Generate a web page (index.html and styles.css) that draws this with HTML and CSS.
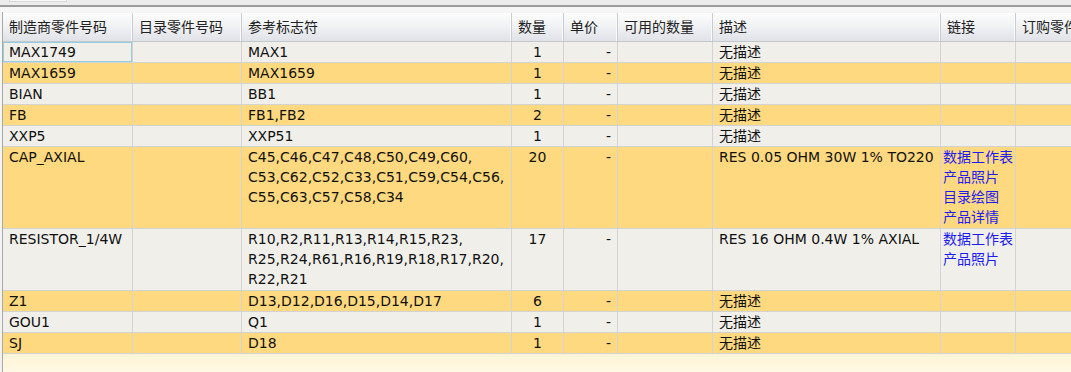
FILE: index.html
```html
<!DOCTYPE html>
<html lang="zh">
<head>
<meta charset="utf-8">
<title>BOM</title>
<link rel="stylesheet" href="styles.css">
</head>
<body>
<div class="topbar"><div class="tab"></div></div>
<div class="divider"></div>
<div class="frame">
  <div class="grid">
    <div class="row head">
      <div class="c">制造商零件号码</div>
      <div class="c">目录零件号码</div>
      <div class="c">参考标志符</div>
      <div class="c">数量</div>
      <div class="c">单价</div>
      <div class="c">可用的数量</div>
      <div class="c">描述</div>
      <div class="c">链接</div>
      <div class="c">订购零件号码</div>
    </div>
    <div class="row light">
      <div class="c focus">MAX1749</div><div class="c"></div><div class="c">MAX1</div><div class="c num">1</div><div class="c price">-</div><div class="c"></div><div class="c">无描述</div><div class="c link"></div><div class="c"></div>
    </div>
    <div class="row yellow">
      <div class="c">MAX1659</div><div class="c"></div><div class="c">MAX1659</div><div class="c num">1</div><div class="c price">-</div><div class="c"></div><div class="c">无描述</div><div class="c link"></div><div class="c"></div>
    </div>
    <div class="row light">
      <div class="c">BIAN</div><div class="c"></div><div class="c">BB1</div><div class="c num">1</div><div class="c price">-</div><div class="c"></div><div class="c">无描述</div><div class="c link"></div><div class="c"></div>
    </div>
    <div class="row yellow">
      <div class="c">FB</div><div class="c"></div><div class="c">FB1,FB2</div><div class="c num">2</div><div class="c price">-</div><div class="c"></div><div class="c">无描述</div><div class="c link"></div><div class="c"></div>
    </div>
    <div class="row light">
      <div class="c">XXP5</div><div class="c"></div><div class="c">XXP51</div><div class="c num">1</div><div class="c price">-</div><div class="c"></div><div class="c">无描述</div><div class="c link"></div><div class="c"></div>
    </div>
    <div class="row yellow tall">
      <div class="c">CAP_AXIAL</div><div class="c"></div><div class="c">C45,C46,C47,C48,C50,C49,C60,<br>C53,C62,C52,C33,C51,C59,C54,C56,<br>C55,C63,C57,C58,C34</div><div class="c num">20</div><div class="c price">-</div><div class="c"></div><div class="c">RES 0.05 OHM 30W 1% TO220</div><div class="c link"><a>数据工作表</a><a>产品照片</a><a>目录绘图</a><a>产品详情</a></div><div class="c"></div>
    </div>
    <div class="row light tall">
      <div class="c">RESISTOR_1/4W</div><div class="c"></div><div class="c">R10,R2,R11,R13,R14,R15,R23,<br>R25,R24,R61,R16,R19,R18,R17,R20,<br>R22,R21</div><div class="c num">17</div><div class="c price">-</div><div class="c"></div><div class="c">RES 16 OHM 0.4W 1% AXIAL</div><div class="c link"><a>数据工作表</a><a>产品照片</a></div><div class="c"></div>
    </div>
    <div class="row yellow">
      <div class="c">Z1</div><div class="c"></div><div class="c">D13,D12,D16,D15,D14,D17</div><div class="c num">6</div><div class="c price">-</div><div class="c"></div><div class="c">无描述</div><div class="c link"></div><div class="c"></div>
    </div>
    <div class="row light">
      <div class="c">GOU1</div><div class="c"></div><div class="c">Q1</div><div class="c num">1</div><div class="c price">-</div><div class="c"></div><div class="c">无描述</div><div class="c link"></div><div class="c"></div>
    </div>
    <div class="row yellow">
      <div class="c">SJ</div><div class="c"></div><div class="c">D18</div><div class="c num">1</div><div class="c price">-</div><div class="c"></div><div class="c">无描述</div><div class="c link"></div><div class="c"></div>
    </div>
    <div class="filler"></div>
  </div>
</div>
</body>
</html>
```
FILE: styles.css
```css
html, body {
  margin: 0;
  padding: 0;
  width: 1071px;
  height: 372px;
  overflow: hidden;
  background: #ececec;
  font-family: "DejaVu Sans", "Noto Sans CJK SC", sans-serif;
  font-size: 14px;
  color: #111;
}

.topbar {
  height: 5px;
  background: #ececec;
  padding-left: 9px;
}

.tab {
  width: 56px;
  height: 1px;
  background: #f8f8f8;
  border: 1px solid #d8d8d8;
  border-top: none;
}

.divider {
  height: 2px;
  background: #9c9c9c;
}

.frame {
  padding-top: 5px;
  padding-left: 2px;
  background: linear-gradient(#f6f6f6, #f2f2f2);
  height: 365px;
  box-sizing: border-box;
}

.grid {
  border-left: 1px solid #a8a8a8;
  height: 100%;
  display: flex;
  flex-direction: column;
  overflow: hidden;
}

.row {
  display: grid;
  grid-template-columns: 130px 109px 270px 52px 54px 95px 228px 75px 160px;
  border-bottom: 1px solid #d3d3d3;
  line-height: 20px;
  white-space: nowrap;
  flex: none;
}

.row .c {
  border-right: 1px solid #d3d3d3;
  padding: 0 0 0 6px;
  overflow: hidden;
}

.light { background: #f0efea; }
.yellow { background: #fed97f; }

.tall .c { padding-bottom: 1px; }

.head {
  height: 30px;
  box-sizing: border-box;
  line-height: 29px;
  background: linear-gradient(#fdfdfd, #f1f2f4 45%, #dfe2e7);
  border-top: 1px solid #f4f4f4;
  border-bottom: 1px solid #c4c8cc;
  color: #222;
}

.head .c {
  border-right: 1px solid #c9ccd0;
  box-shadow: inset -1px 0 0 #fafafa;
}

.num { text-align: center; }
.row .num { padding-left: 0; }
.row .price { text-align: right; padding-right: 6px; }

.row .link { padding-left: 2px; }
.link a {
  display: block;
  color: #1c1cf0;
}

.focus {
  box-shadow: inset 0 0 0 1px #92cde0;
}

.filler {
  flex: 1;
  background: linear-gradient(#fff4d6, #fff8e4);
}
```
